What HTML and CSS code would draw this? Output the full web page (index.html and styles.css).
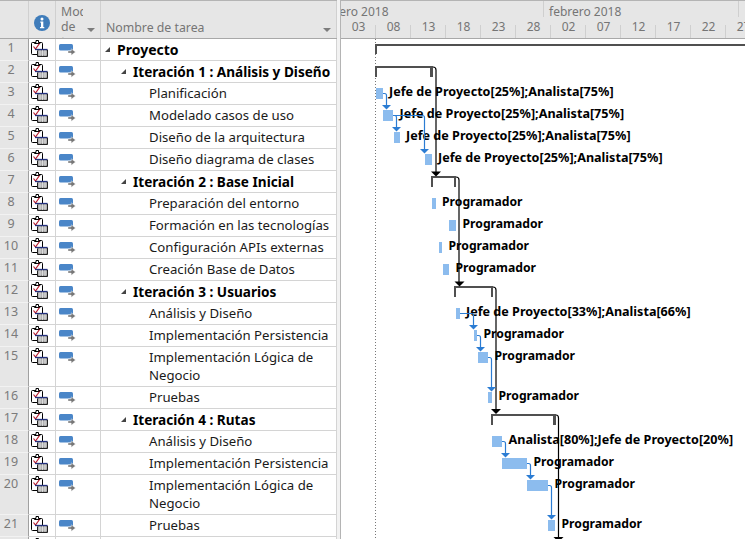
FILE: index.html

```html
<!DOCTYPE html>
<html lang="es">
<head>
  <meta charset="UTF-8">
  <title>Proyecto - Diagrama de Gantt</title>
  <link rel="stylesheet" href="styles.css">
</head>
<body>
  <svg class="defs" width="0" height="0">
    <symbol id="task" viewBox="0 0 17 17">
      <rect x=".5" y="2.500" width="11" height="12" rx="1" fill="#fff" stroke="#000"/>
      <path d="M3.500 3.500v-1h1.500v-2h2.500v2h1.500v1z" fill="#fff" stroke="#000"/>
      <path d="M2.500 6.500l2 2.500 4-5.500" fill="none" stroke="#b81c2e" stroke-width="1.200"/>
      <rect x="6.500" y="9" width="10" height="7.500" fill="#8f8f8f"/>
      <path d="M9 10v6M11.500 10v6M14 10v6M7 12h9.500M7 14h9.500" stroke="#e8e8e8" stroke-width=".8"/>
      <path d="M4 9.500h12.500" stroke="#24317f" stroke-width="1.300"/>
      <path d="M16.500 10v6.500h-10v-6" fill="none" stroke="#222" stroke-width="1"/>
    </symbol>
    <symbol id="mode" viewBox="0 0 17 12">
      <rect x="0" y="0" width="14" height="6.500" rx="1.500" fill="#4a86c8"/>
      <path d="M9 7h3.200v-2.200l4.300 3.200-4.300 3.200v-2.200h-3.200z" fill="#777" stroke="#fff" stroke-width=".4"/>
    </symbol>
  </svg>

  <div class="app">
    <div class="sheet">
      <div class="head-row">
        <div class="head-cell cell-num"></div>
        <div class="head-cell cell-info">
          <svg class="info" viewBox="0 0 16 16"><circle cx="8" cy="8" r="8" fill="#3f7cba"/><circle cx="8" cy="4" r="1.500" fill="#fff"/><path d="M6.300 6.500h3v5.500h1v1.300h-4.300v-1.300h1v-4.200h-.7z" fill="#fff"/></svg>
        </div>
        <div class="head-cell cell-mode">
          <span class="mode-title">Modo de tarea</span>
          <span class="caret"></span>
        </div>
        <div class="head-cell cell-name">
          <span class="name-title">Nombre de tarea</span>
          <span class="caret"></span>
        </div>
      </div>

      <div class="row"><div class="cell-num">1</div><div class="cell-info"><svg class="ico-task"><use href="#task"/></svg></div><div class="cell-mode"><svg class="ico-mode"><use href="#mode"/></svg></div><div class="cell-name lvl0 group"><span class="tri"></span>Proyecto</div></div>
      <div class="row"><div class="cell-num">2</div><div class="cell-info"><svg class="ico-task"><use href="#task"/></svg></div><div class="cell-mode"><svg class="ico-mode"><use href="#mode"/></svg></div><div class="cell-name lvl1 group"><span class="tri"></span>Iteración 1 : Análisis y Diseño</div></div>
      <div class="row"><div class="cell-num">3</div><div class="cell-info"><svg class="ico-task"><use href="#task"/></svg></div><div class="cell-mode"><svg class="ico-mode"><use href="#mode"/></svg></div><div class="cell-name lvl2">Planificación</div></div>
      <div class="row"><div class="cell-num">4</div><div class="cell-info"><svg class="ico-task"><use href="#task"/></svg></div><div class="cell-mode"><svg class="ico-mode"><use href="#mode"/></svg></div><div class="cell-name lvl2">Modelado casos de uso</div></div>
      <div class="row"><div class="cell-num">5</div><div class="cell-info"><svg class="ico-task"><use href="#task"/></svg></div><div class="cell-mode"><svg class="ico-mode"><use href="#mode"/></svg></div><div class="cell-name lvl2">Diseño de la arquitectura</div></div>
      <div class="row"><div class="cell-num">6</div><div class="cell-info"><svg class="ico-task"><use href="#task"/></svg></div><div class="cell-mode"><svg class="ico-mode"><use href="#mode"/></svg></div><div class="cell-name lvl2">Diseño diagrama de clases</div></div>
      <div class="row"><div class="cell-num">7</div><div class="cell-info"><svg class="ico-task"><use href="#task"/></svg></div><div class="cell-mode"><svg class="ico-mode"><use href="#mode"/></svg></div><div class="cell-name lvl1 group"><span class="tri"></span>Iteración 2 : Base Inicial</div></div>
      <div class="row"><div class="cell-num">8</div><div class="cell-info"><svg class="ico-task"><use href="#task"/></svg></div><div class="cell-mode"><svg class="ico-mode"><use href="#mode"/></svg></div><div class="cell-name lvl2">Preparación del entorno</div></div>
      <div class="row"><div class="cell-num">9</div><div class="cell-info"><svg class="ico-task"><use href="#task"/></svg></div><div class="cell-mode"><svg class="ico-mode"><use href="#mode"/></svg></div><div class="cell-name lvl2">Formación en las tecnologías</div></div>
      <div class="row"><div class="cell-num">10</div><div class="cell-info"><svg class="ico-task"><use href="#task"/></svg></div><div class="cell-mode"><svg class="ico-mode"><use href="#mode"/></svg></div><div class="cell-name lvl2">Configuración APIs externas</div></div>
      <div class="row"><div class="cell-num">11</div><div class="cell-info"><svg class="ico-task"><use href="#task"/></svg></div><div class="cell-mode"><svg class="ico-mode"><use href="#mode"/></svg></div><div class="cell-name lvl2">Creación Base de Datos</div></div>
      <div class="row"><div class="cell-num">12</div><div class="cell-info"><svg class="ico-task"><use href="#task"/></svg></div><div class="cell-mode"><svg class="ico-mode"><use href="#mode"/></svg></div><div class="cell-name lvl1 group"><span class="tri"></span>Iteración 3 : Usuarios</div></div>
      <div class="row"><div class="cell-num">13</div><div class="cell-info"><svg class="ico-task"><use href="#task"/></svg></div><div class="cell-mode"><svg class="ico-mode"><use href="#mode"/></svg></div><div class="cell-name lvl2">Análisis y Diseño</div></div>
      <div class="row"><div class="cell-num">14</div><div class="cell-info"><svg class="ico-task"><use href="#task"/></svg></div><div class="cell-mode"><svg class="ico-mode"><use href="#mode"/></svg></div><div class="cell-name lvl2">Implementación Persistencia</div></div>
      <div class="row tall"><div class="cell-num">15</div><div class="cell-info"><svg class="ico-task"><use href="#task"/></svg></div><div class="cell-mode"><svg class="ico-mode"><use href="#mode"/></svg></div><div class="cell-name lvl2">Implementación Lógica de Negocio</div></div>
      <div class="row"><div class="cell-num">16</div><div class="cell-info"><svg class="ico-task"><use href="#task"/></svg></div><div class="cell-mode"><svg class="ico-mode"><use href="#mode"/></svg></div><div class="cell-name lvl2">Pruebas</div></div>
      <div class="row"><div class="cell-num">17</div><div class="cell-info"><svg class="ico-task"><use href="#task"/></svg></div><div class="cell-mode"><svg class="ico-mode"><use href="#mode"/></svg></div><div class="cell-name lvl1 group"><span class="tri"></span>Iteración 4 : Rutas</div></div>
      <div class="row"><div class="cell-num">18</div><div class="cell-info"><svg class="ico-task"><use href="#task"/></svg></div><div class="cell-mode"><svg class="ico-mode"><use href="#mode"/></svg></div><div class="cell-name lvl2">Análisis y Diseño</div></div>
      <div class="row"><div class="cell-num">19</div><div class="cell-info"><svg class="ico-task"><use href="#task"/></svg></div><div class="cell-mode"><svg class="ico-mode"><use href="#mode"/></svg></div><div class="cell-name lvl2">Implementación Persistencia</div></div>
      <div class="row tall"><div class="cell-num">20</div><div class="cell-info"><svg class="ico-task"><use href="#task"/></svg></div><div class="cell-mode"><svg class="ico-mode"><use href="#mode"/></svg></div><div class="cell-name lvl2">Implementación Lógica de Negocio</div></div>
      <div class="row"><div class="cell-num">21</div><div class="cell-info"><svg class="ico-task"><use href="#task"/></svg></div><div class="cell-mode"><svg class="ico-mode"><use href="#mode"/></svg></div><div class="cell-name lvl2">Pruebas</div></div>
      <div class="row"><div class="cell-num"></div><div class="cell-info"><svg class="ico-task"><use href="#task"/></svg></div><div class="cell-mode"></div><div class="cell-name"></div></div>
    </div>

    <div class="splitter"></div>

    <div class="gantt">
      <div class="scale">
        <div class="tier-top">
          <div class="month month-jan">enero 2018</div>
          <div class="month month-feb">febrero 2018</div>
        </div>
        <div class="tier-bottom">
          <div class="tick">03</div><div class="tick">08</div><div class="tick">13</div><div class="tick">18</div>
          <div class="tick">23</div><div class="tick">28</div><div class="tick">02</div><div class="tick">07</div>
          <div class="tick">12</div><div class="tick">17</div><div class="tick">22</div><div class="tick">27</div>
        </div>
      </div>

      <!-- coordinates in this svg are page coordinates -->
      <svg class="chart" viewBox="341 39 404 500">
        <line class="today" x1="375.500" y1="39" x2="375.500" y2="539"/>

        <g class="labels">
          <text x="389" y="96">Jefe de Proyecto[25%];Analista[75%]</text>
          <text x="399.500" y="118">Jefe de Proyecto[25%];Analista[75%]</text>
          <text x="406" y="140">Jefe de Proyecto[25%];Analista[75%]</text>
          <text x="438" y="162">Jefe de Proyecto[25%];Analista[75%]</text>
          <text class="prog" x="442" y="206">Programador</text>
          <text class="prog" x="462.500" y="228">Programador</text>
          <text class="prog" x="448.500" y="250">Programador</text>
          <text class="prog" x="455.500" y="272">Programador</text>
          <text x="466" y="316">Jefe de Proyecto[33%];Analista[66%]</text>
          <text class="prog" x="483.500" y="338">Programador</text>
          <text class="prog" x="494.500" y="360">Programador</text>
          <text class="prog" x="498.500" y="400">Programador</text>
          <text x="508.500" y="444">Analista[80%];Jefe de Proyecto[20%]</text>
          <text class="prog" x="533.500" y="466">Programador</text>
          <text class="prog" x="554.500" y="488">Programador</text>
          <text class="prog" x="561.500" y="528">Programador</text>
        </g>

        <g class="bars">
          <rect x="376" y="88" width="7" height="11"/>
          <rect x="383" y="110" width="10" height="11"/>
          <rect x="394" y="132" width="6" height="11"/>
          <rect x="425" y="154" width="7" height="11"/>
          <rect x="432" y="198" width="4" height="11"/>
          <rect x="449" y="220" width="7" height="11"/>
          <rect x="439" y="242" width="3" height="11"/>
          <rect x="443" y="264" width="6" height="11"/>
          <rect x="456" y="308" width="4" height="11"/>
          <rect x="474" y="330" width="3" height="11"/>
          <rect x="478" y="352" width="10" height="11"/>
          <rect x="488" y="392" width="4" height="11"/>
          <rect x="492" y="436" width="10" height="11"/>
          <rect x="502" y="458" width="25" height="11"/>
          <rect x="527" y="480" width="21" height="11"/>
          <rect x="548" y="520" width="7" height="11"/>
        </g>

        <g class="summary">
          <path d="M375 44h370v2h-368v8h-2z"/>
          <path d="M375 66h58v11h-3v-9h-53v9h-2z"/>
          <path d="M431 176h25v11h-2v-9h-21v9h-2z"/>
          <path d="M454 286h39v11h-2v-9h-35v9h-2z"/>
          <path d="M491 414h65v11h-3v-9h-60v9h-2z"/>
        </g>

        <g class="links-black">
          <path d="M433 67q3 0 3 3v102"/>
          <path d="M456 177q3 0 3 3v102"/>
          <path d="M493 287q3 0 3 3v120"/>
          <path d="M556 415q2.500 0 2.500 3v120"/>
        </g>
        <g class="heads-black">
          <path d="M431 171.500h10l-5 5z"/>
          <path d="M454.500 281.500h10l-5 5z"/>
          <path d="M491 409h10l-5 5z"/>
          <path d="M553.500 537h10l-5 5z"/>
        </g>

        <g class="links-blue">
          <path d="M383 93.500h1.500q2 0 2 2v10"/>
          <path d="M393 115.500h1.500q2 0 2 2v10"/>
          <path d="M393 115.500h29.500q2 0 2 2v32"/>
          <path d="M460 313.500h11.500q2 0 2 2v10"/>
          <path d="M477 335.500h1.500q2 0 2 2v10"/>
          <path d="M488 357.500h1.500q2 0 2 2v28"/>
          <path d="M502 441.500h1.500q2 0 2 2v10"/>
          <path d="M527 463.500h1.500q2 0 2 2v10"/>
          <path d="M548 485.500h1.500q2 0 2 2v28"/>
        </g>
        <g class="heads-blue">
          <path d="M382 105h9l-4.500 4.500z"/>
          <path d="M392 127h9l-4.500 4.500z"/>
          <path d="M420 149h9l-4.500 4.500z"/>
          <path d="M469 325h9l-4.500 4.500z"/>
          <path d="M476 347h9l-4.500 4.500z"/>
          <path d="M487 387h9l-4.500 4.500z"/>
          <path d="M501 453h9l-4.500 4.500z"/>
          <path d="M526 475h9l-4.500 4.500z"/>
          <path d="M547 515h9l-4.500 4.500z"/>
        </g>
      </svg>
    </div>
  </div>
</body>
</html>
```

FILE: styles.css

```css
html, body {
  margin: 0;
  height: 539px;
  overflow: hidden;
  background: #fff;
}
body {
  font-family: "Noto Sans", sans-serif;
  font-size: 13.2px;
  color: #1a1a1a;
}
.defs {
  position: absolute;
}
.app {
  display: flex;
  height: 539px;
  overflow: hidden;
}

/* left table */
.sheet {
  width: 337px;
  flex: none;
  overflow: hidden;
}
.head-row {
  display: grid;
  grid-template-columns: 29px 27px 45px 236px;
  height: 37px;
  background: #e6e6e6;
  border-top: 1px solid #b4b4b4;
  border-bottom: 1px solid #a8a8a8;
  color: #757575;
  font-size: 12.3px;
}
.head-cell {
  position: relative;
  height: 37px;
  overflow: hidden;
  border-right: 1px solid #d0d0d0;
  box-sizing: border-box;
}
.info {
  display: block;
  width: 16px;
  height: 16px;
  margin: 14px 0 0 5px;
}
.mode-title {
  display: block;
  width: 22px;
  margin: 3px 0 0 5px;
  line-height: 15px;
  overflow: hidden;
}
.name-title {
  display: block;
  margin: 18px 0 0 5px;
  line-height: 16px;
}
.caret {
  position: absolute;
  right: 5px;
  bottom: 6px;
  border: 4px solid transparent;
  border-top: 4px solid #7c7c7c;
  border-bottom: 0;
}
.row {
  display: grid;
  grid-template-columns: 29px 27px 45px 236px;
  height: 22px;
  box-sizing: border-box;
}
.row.tall {
  height: 40px;
}
.row > div {
  box-sizing: border-box;
  border-right: 1px solid #d4d4d4;
  border-bottom: 1px solid #d4d4d4;
  overflow: hidden;
}
.row > .cell-num {
  background: #e6e6e6;
  color: #7b7b7b;
  font-size: 12.5px;
  line-height: 18px;
  padding-right: 6px;
  text-align: center;
  border-right: 1px solid #a0a0a0;
  border-bottom: 1px solid #f2f2f2;
}
.ico-task {
  display: block;
  width: 17px;
  height: 17px;
  margin: 1px 0 0 2px;
}
.ico-mode {
  display: block;
  width: 17px;
  height: 12px;
  margin: 5px 0 0 3px;
}
.cell-name {
  line-height: 18px;
  padding-top: 1px;
  padding-right: 2px;
}
.lvl0 {
  padding-left: 16px;
  font-size: 14px;
}
.lvl1 {
  padding-left: 32px;
  font-size: 13.6px;
}
.lvl2 {
  padding-left: 48px;
}
.group {
  font-weight: 700;
  color: #000;
  position: relative;
  padding-top: 2px;
}
.tri {
  position: absolute;
  margin: 6px 0 0 -12px;
  border-bottom: 5px solid #444;
  border-left: 5px solid transparent;
}

.splitter {
  width: 3px;
  flex: none;
  background: #f2f2f2;
  border-right: 1px solid #b4b4b4;
}

/* gantt side */
.gantt {
  width: 404px;
  flex: none;
  overflow: hidden;
}
.scale {
  height: 37px;
  background: #e6e6e6;
  border-top: 1px solid #b4b4b4;
  border-bottom: 1px solid #a8a8a8;
  color: #757575;
  font-size: 12px;
  overflow: hidden;
}
.tier-top {
  display: flex;
  height: 20px;
  line-height: 21px;
}
.month {
  flex: none;
  box-sizing: border-box;
  border-right: 1px solid #cfcfcf;
  white-space: nowrap;
  height: 16px;
}
.month-jan {
  width: 203px;
  text-indent: -16px;
}
.month-feb {
  width: 195px;
  padding-left: 5px;
}
.tier-bottom {
  display: flex;
  height: 17px;
  line-height: 12px;
}
.tick {
  position: relative;
  flex: none;
  width: 35px;
  box-sizing: border-box;
  text-align: center;
}
.tick::after {
  content: "";
  position: absolute;
  right: 0;
  bottom: 0;
  width: 1px;
  height: 13px;
  background: #cfcfcf;
}
.chart {
  display: block;
  width: 404px;
  height: 500px;
}
.today {
  stroke: #777;
  stroke-width: 1;
  stroke-dasharray: 1 2;
}
.labels text {
  font-family: "Noto Sans", sans-serif;
  font-size: 12.6px;
  font-weight: 700;
  fill: #000;
}
.labels .prog {
  font-size: 12.2px;
}
.bars rect {
  fill: #8cbcee;
}
.summary path {
  fill: #505050;
}
.links-black path {
  fill: none;
  stroke: #000;
  stroke-width: 1.200;
}
.heads-black path {
  fill: #000;
}
.links-blue path {
  fill: none;
  stroke: #2b7cd3;
  stroke-width: 1.200;
}
.heads-blue path {
  fill: #2b7cd3;
}
```
